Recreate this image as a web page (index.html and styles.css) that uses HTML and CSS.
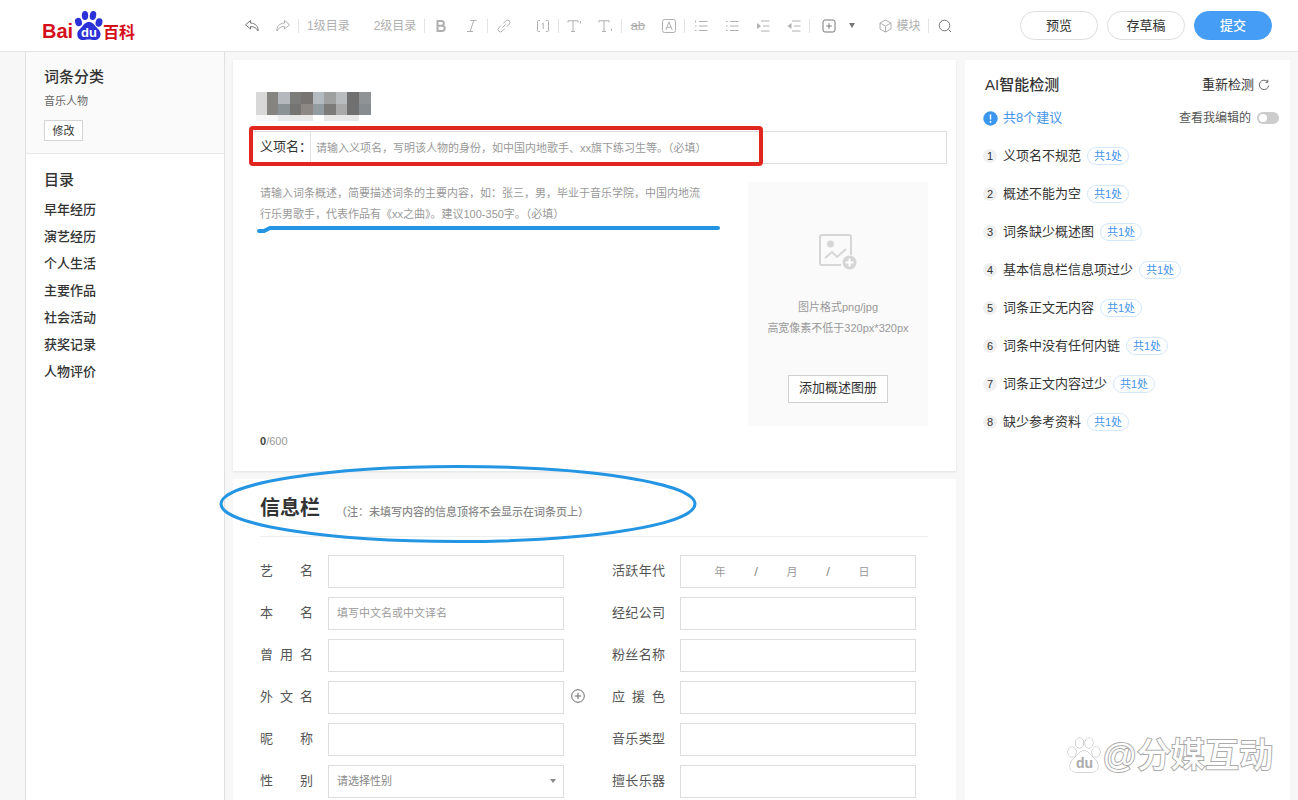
FILE: index.html
```html
<!DOCTYPE html>
<html lang="zh-CN">
<head>
<meta charset="utf-8">
<meta name="viewport" content="width=device-width, initial-scale=1">
<title>百度百科 词条编辑</title>
<link rel="stylesheet" href="styles.css">
</head>
<body>
<div class="page">
  <header class="topbar">
    <a class="logo" href="#" aria-label="百度百科">
      <svg width="94" height="32" viewBox="0 0 94 32">
        <text class="logo-latin" x="0" y="28">Bai</text>
        <g fill="#2b32d8">
          <ellipse cx="36.500" cy="12" rx="3.400" ry="4.300" transform="rotate(-18 36.500 12)"/>
          <ellipse cx="43" cy="5.500" rx="3.200" ry="4.500"/>
          <ellipse cx="51" cy="5.500" rx="3.200" ry="4.500" transform="rotate(10 51 5.500)"/>
          <ellipse cx="57" cy="12.500" rx="3.400" ry="4.300" transform="rotate(14 57 12.500)"/>
          <path d="M47 12c3.500 0 5 2.400 7 4.800 2 2.300 4.500 4 4.500 7.400 0 3.800-2.800 5.800-6 5.800-2.300 0-3.500-.6-5.700-.6s-3.600.6-5.900.6c-3.300 0-5.600-2.200-5.600-5.800 0-3.500 2.800-5 4.700-7.400C41.800 14.400 43.500 12 47 12z"/>
        </g>
        <text class="logo-du" x="39" y="27">du</text>
        <text class="logo-han" x="61" y="28">百科</text>
      </svg>
    </a>
    <div class="toolbar" role="toolbar" aria-label="编辑工具">
      <button class="tool tool-on" aria-label="撤销"><svg width="16" height="16" viewBox="0 0 16 16"><path d="M6.500 2.500 1.500 6.800l5 4.200V8.600c3.500-.2 5.800 1.300 7.600 4.400.3-4.600-2.600-7.700-7.600-8z"/></svg></button>
      <button class="tool" aria-label="重做"><svg width="16" height="16" viewBox="0 0 16 16"><path d="m9.500 2.500 5 4.300-5 4.200V8.600C6 8.400 3.700 9.900 1.900 13c-.3-4.600 2.600-7.700 7.600-8z"/></svg></button>
      <span class="sep"></span>
      <button class="tool-text">1级目录</button>
      <button class="tool-text tool-next">2级目录</button>
      <span class="sep"></span>
      <button class="tool" aria-label="加粗"><svg width="14" height="14" viewBox="0 0 14 14"><path stroke-width="2" d="M3.500 2h4a2.300 2.300 0 0 1 0 4.700h-4zM3.500 6.700h4.600a2.600 2.600 0 0 1 0 5.300H3.500z"/></svg></button>
      <button class="tool" aria-label="斜体"><svg width="14" height="14" viewBox="0 0 14 14"><path d="M5.500 1.500h6M2 12.500h6M8.700 1.500l-3.500 11"/></svg></button>
      <span class="sep"></span>
      <button class="tool" aria-label="链接"><svg width="14" height="14" viewBox="0 0 14 14"><path d="M5.300 8.700 8.700 5.300M6.300 4.300l2.500-2.500a2.400 2.400 0 0 1 3.400 3.400L9.700 7.700M7.700 9.700l-2.500 2.500a2.400 2.400 0 0 1-3.400-3.400l2.500-2.500"/></svg></button>
      <button class="tool tool-next" aria-label="参考资料"><svg width="14" height="14" viewBox="0 0 14 14"><path d="M4 1.500H2.500a1 1 0 0 0-1 1v9a1 1 0 0 0 1 1H4M10 1.500h1.500a1 1 0 0 1 1 1v9a1 1 0 0 1-1 1H10M5.800 5.300 7.200 4v6"/></svg></button>
      <span class="sep"></span>
      <button class="tool" aria-label="上标"><svg width="16" height="14" viewBox="0 0 16 14"><path d="M1 3.500V1.800h10v1.700M6 1.800v10.700M4 12.500h4M13.500 2v2.500"/></svg></button>
      <button class="tool" aria-label="下标"><svg width="16" height="14" viewBox="0 0 16 14"><path d="M1 3.500V1.800h10v1.700M6 1.800v10.700M4 12.500h4M13.500 9.500V12"/></svg></button>
      <span class="sep"></span>
      <button class="tool tool-strike" aria-label="删除线">ab</button>
      <button class="tool" aria-label="文字样式"><svg width="16" height="16" viewBox="0 0 16 16"><rect x="1.500" y="1.500" width="13" height="13" rx="2"/><path d="m4.800 12 3.200-8 3.200 8M6 9.300h4"/></svg></button>
      <span class="sep"></span>
      <button class="tool" aria-label="有序列表"><svg width="14" height="14" viewBox="0 0 14 14"><path d="M5 2.500h8.500M5 7h8.500M5 11.500h8.500M1.500 1.500v2M1 7h1.500M1 11.500h1.500"/></svg></button>
      <button class="tool" aria-label="无序列表"><svg width="14" height="14" viewBox="0 0 14 14"><path d="M5 2.500h8.500M5 7h8.500M5 11.500h8.500M1 2.500h1.500M1 7h1.500M1 11.500h1.500"/></svg></button>
      <button class="tool" aria-label="增加缩进"><svg width="14" height="14" viewBox="0 0 14 14"><path d="M5 2h8.500M7 7h6.500M5 12h8.500"/><path fill="currentColor" stroke="none" d="m1 4 4 3-4 3z"/></svg></button>
      <button class="tool" aria-label="减少缩进"><svg width="14" height="14" viewBox="0 0 14 14"><path d="M5 2h8.500M7 7h6.500M5 12h8.500"/><path fill="currentColor" stroke="none" d="M4.500 4v6L.5 7z"/></svg></button>
      <span class="sep"></span>
      <button class="tool-insert" aria-label="插入"><svg width="14" height="14" viewBox="0 0 14 14"><rect x="1" y="1" width="12" height="12" rx="2"/><path d="M7 4.200v5.600M4.200 7h5.600"/></svg><svg width="6" height="5" viewBox="0 0 6 5"><path fill="currentColor" stroke="none" d="M0 0h6L3 5z"/></svg></button>
      <button class="tool-module"><svg width="13" height="14" viewBox="0 0 13 14"><path d="m6.500 1 5.500 3v6l-5.500 3L1 10V4zM1 4l5.500 3L12 4M6.500 7v6"/></svg>模块</button>
      <span class="sep"></span>
      <button class="tool tool-on" aria-label="搜索"><svg width="14" height="14" viewBox="0 0 14 14"><circle cx="6.500" cy="6.500" r="5.300"/><path d="m10.500 10.500 2.500 2.500"/></svg></button>
    </div>
    <div class="actions">
      <button class="pill">预览</button>
      <button class="pill">存草稿</button>
      <button class="pill pill-primary">提交</button>
    </div>
  </header>

  <div class="columns">
    <aside class="sidebar">
      <section class="category">
        <h2 class="side-title">词条分类</h2>
        <p class="category-name">音乐人物</p>
        <button class="small-button">修改</button>
      </section>
      <nav class="toc" aria-label="目录">
        <h2 class="side-title">目录</h2>
        <ul class="toc-list">
          <li><a href="#">早年经历</a></li>
          <li><a href="#">演艺经历</a></li>
          <li><a href="#">个人生活</a></li>
          <li><a href="#">主要作品</a></li>
          <li><a href="#">社会活动</a></li>
          <li><a href="#">获奖记录</a></li>
          <li><a href="#">人物评价</a></li>
        </ul>
      </nav>
    </aside>

    <main class="editor">
      <section class="card summary">
        <svg class="masked-name" width="115" height="29" viewBox="0 0 115 29" role="img" aria-label="已遮挡的词条名">
          <path fill="#d8d8d8" d="M0 0h11v23H0z"/><path fill="#858481" d="M11 0h11v23H11z"/>
          <path fill="#b5b9bd" d="M22 0h12v12H22z"/><path fill="#8b9296" d="M22 12h12v11H22z"/>
          <path fill="#7c7d7b" d="M34 0h11v12H34z"/><path fill="#747472" d="M34 12h11v11H34z"/>
          <path fill="#777471" d="M45 0h12v12H45z"/><path fill="#8d8883" d="M45 12h12v11H45z"/>
          <path fill="#b4bbc0" d="M57 0h11v12H57z"/><path fill="#939ca0" d="M57 12h11v11H57z"/>
          <path fill="#9fa0a0" d="M68 0h12v12H68z"/><path fill="#7c7b79" d="M68 12h12v11H68z"/>
          <path fill="#b9bcbf" d="M80 0h11v12H80z"/><path fill="#a9a9a9" d="M80 12h11v11H80z"/>
          <path fill="#6f706f" d="M91 0h12v23H91z"/>
          <path fill="#8f9396" d="M103 0h12v12h-12z"/><path fill="#868c90" d="M103 12h12v11h-12z"/>
          <path fill="#f7f7f7" d="M0 23h22v6H0z"/><path fill="#e8e8e8" d="M22 23h35v6H22zM68 23h35v6H68z"/>
        </svg>
        <div class="sense">
          <label class="sense-label" for="sense">义项名：</label>
          <input class="sense-input" id="sense" type="text" placeholder="请输入义项名，写明该人物的身份，如中国内地歌手、xx旗下练习生等。（必填）">
          <span class="mark-box"></span>
        </div>
        <div class="intro">
          <div class="intro-text">
            <textarea class="intro-area" aria-label="词条概述" placeholder="请输入词条概述，简要描述词条的主要内容，如：张三，男，毕业于音乐学院，中国内地流行乐男歌手，代表作品有《xx之曲》。建议100-350字。（必填）"></textarea>
            <svg class="mark-line" width="464" height="8" viewBox="0 0 464 8"><path d="M3 6h5l6-3h448"/></svg>
          </div>
          <div class="album">
            <svg class="album-icon" width="40" height="38" viewBox="0 0 40 38">
              <path fill="none" stroke="#d6d6d6" stroke-width="2" d="M23 32H4a2 2 0 0 1-2-2V4a2 2 0 0 1 2-2h27a2 2 0 0 1 2 2v18M7 25l7-6 5 5 9-8"/>
              <circle cx="12.500" cy="11" r="3.500" fill="#d6d6d6"/>
              <circle cx="31.500" cy="29.500" r="7" fill="#d6d6d6"/>
              <path stroke="#fff" stroke-width="2" d="M31.500 25.500v8M27.500 29.500h8"/>
            </svg>
            <p class="album-hint">图片格式png/jpg<br>高宽像素不低于320px*320px</p>
            <button class="album-button">添加概述图册</button>
          </div>
        </div>
        <p class="counter"><b>0</b>/600</p>
      </section>

      <section class="card info">
        <div class="info-head">
          <h2 class="info-title">信息栏</h2>
          <span class="info-note">（注：未填写内容的信息顶将不会显示在词条页上）</span>
          <svg class="mark-ellipse" width="478" height="80" viewBox="0 0 478 80"><ellipse cx="239" cy="40" rx="237" ry="37.500"/></svg>
        </div>
        <form class="fields">
          <div class="field"><label for="f1">艺名</label><input id="f1" type="text"></div>
          <div class="field"><label for="year">活跃年代</label>
            <div class="date"><input id="year" type="text" placeholder="年"><span>/</span><input type="text" aria-label="月" placeholder="月"><span>/</span><input type="text" aria-label="日" placeholder="日"></div>
          </div>
          <div class="field"><label for="f2">本名</label><input id="f2" type="text" placeholder="填写中文名或中文译名"></div>
          <div class="field"><label for="f3">经纪公司</label><input id="f3" type="text"></div>
          <div class="field"><label for="f4">曾用名</label><input id="f4" type="text"></div>
          <div class="field"><label for="f5">粉丝名称</label><input id="f5" type="text"></div>
          <div class="field"><label for="f6">外文名</label><input id="f6" type="text">
            <button class="add" type="button" aria-label="添加外文名"><svg width="14" height="14" viewBox="0 0 14 14"><circle cx="7" cy="7" r="6.300"/><path d="M7 3.800v6.400M3.800 7h6.400"/></svg></button>
          </div>
          <div class="field"><label for="f7">应援色</label><input id="f7" type="text"></div>
          <div class="field"><label for="f8">昵称</label><input id="f8" type="text"></div>
          <div class="field"><label for="f9">音乐类型</label><input id="f9" type="text"></div>
          <div class="field"><label for="f10">性别</label>
            <div class="select"><select id="f10"><option>请选择性别</option><option>男</option><option>女</option></select><svg width="6" height="4" viewBox="0 0 6 4"><path fill="#888" d="M0 0h6L3 4z"/></svg></div>
          </div>
          <div class="field"><label for="f11">擅长乐器</label><input id="f11" type="text"></div>
        </form>
      </section>
    </main>

    <aside class="card checks">
      <div class="checks-row">
        <h2 class="checks-title">AI智能检测</h2>
        <button class="recheck">重新检测<svg width="12" height="12" viewBox="0 0 12 12"><path d="M9.500 2.700A4.700 4.700 0 1 0 10.700 6.500M9.800.8v2.500H7.500"/></svg></button>
      </div>
      <div class="checks-row checks-status">
        <p class="total"><svg width="15" height="15" viewBox="0 0 15 15"><circle cx="7.500" cy="7.500" r="7.200" fill="#3b96f0"/><path stroke="#fff" stroke-width="1.500" d="M7.500 3.500v5M7.500 10v1.700"/></svg>共8个建议</p>
        <label class="mine">查看我编辑的<input class="switch" type="checkbox" role="switch"></label>
      </div>
      <ol class="check-list">
        <li><i>1</i>义项名不规范<a href="#">共1处</a></li>
        <li><i>2</i>概述不能为空<a href="#">共1处</a></li>
        <li><i>3</i>词条缺少概述图<a href="#">共1处</a></li>
        <li><i>4</i>基本信息栏信息项过少<a href="#">共1处</a></li>
        <li><i>5</i>词条正文无内容<a href="#">共1处</a></li>
        <li><i>6</i>词条中没有任何内链<a href="#">共1处</a></li>
        <li><i>7</i>词条正文内容过少<a href="#">共1处</a></li>
        <li><i>8</i>缺少参考资料<a href="#">共1处</a></li>
      </ol>
      <div class="watermark">
        <svg width="34" height="36" viewBox="0 0 34 36" fill="#fff" stroke="#aaa">
          <ellipse cx="5" cy="15" rx="4" ry="5"/><ellipse cx="12.500" cy="6" rx="4" ry="5"/>
          <ellipse cx="22" cy="6" rx="4" ry="5"/><ellipse cx="29" cy="15" rx="4" ry="5"/>
          <path d="M17 14c4 0 6 3 8.500 6 2.500 2.800 5.500 4.500 5.500 9 0 4-3 6-6.500 6h-15C6 35 3 33 3 29c0-4.500 3-6.200 5.500-9 2.500-3 4.500-6 8.500-6z"/>
          <text class="watermark-du" x="9" y="31">du</text>
        </svg>
        <span>@分媒互动</span>
      </div>
    </aside>
  </div>
</div>
</body>
</html>
```
FILE: styles.css
```css
* {
  box-sizing: border-box;
}

body {
  margin: 0;
  background: #f7f7f7;
  color: #333;
  font-family: "Liberation Sans", "Noto Sans CJK SC", sans-serif;
  font-size: 13px;
  line-height: 20px;
}

h2,
p,
ul,
ol {
  margin: 0;
  padding: 0;
}

ul,
ol {
  list-style: none;
}

a {
  color: inherit;
  text-decoration: none;
}

button,
input,
select,
textarea {
  margin: 0;
  padding: 0;
  border: 0;
  border-radius: 0;
  background: none;
  color: inherit;
  font: inherit;
  outline: 0;
}

svg {
  display: block;
  flex: none;
}

::placeholder {
  color: #999;
  opacity: 1;
}

.page {
  display: flex;
  flex-direction: column;
  min-height: 100vh;
}

/* Top bar */
.topbar {
  display: flex;
  align-items: center;
  height: 52px;
  padding: 0 26px 0 42px;
  border-bottom: 1px solid #e6e6e6;
  background: #fff;
}

.logo {
  margin-right: 100px;
}

.logo-latin,
.logo-han {
  fill: #d6101a;
  font-weight: 700;
}

.logo-latin {
  font-size: 20px;
}

.logo-han {
  font-size: 16px;
}

.logo-du {
  fill: #fff;
  font-size: 13px;
  font-weight: 700;
}

.toolbar {
  display: flex;
  align-items: center;
  color: #b0b0b0;
  font-size: 12px;
}

.toolbar svg {
  fill: none;
  stroke: currentColor;
}

.toolbar button {
  display: flex;
  align-items: center;
  justify-content: center;
  height: 24px;
  white-space: nowrap;
}

.toolbar .tool {
  width: 31px;
}

.toolbar .tool-on,
.toolbar .tool-insert {
  color: #777;
}

.tool-text {
  padding: 0 8px;
}

.tool-next {
  margin-left: 8px;
}

.toolbar .tool-strike {
  font-size: 13px;
  text-decoration: line-through;
}

.toolbar .tool-insert {
  gap: 13px;
  padding: 0 12px;
}

.toolbar .tool-module {
  gap: 4px;
  padding: 0 8px 0 12px;
}

.sep {
  width: 1px;
  height: 14px;
  background: #e3e3e3;
}

.actions {
  display: flex;
  gap: 9px;
  margin-left: auto;
}

.pill {
  width: 78px;
  height: 29px;
  border: 1px solid #ddd;
  border-radius: 15px;
  background: #fff;
}

.pill-primary {
  border-color: #459df5;
  background: #459df5;
  color: #fff;
  font-weight: 500;
}

/* Columns */
.columns {
  display: flex;
  flex: 1;
  padding: 0 8px 0 25px;
}

.card {
  background: #fff;
}

.sidebar {
  flex: 0 0 200px;
  border: 1px solid #e0e0e0;
  border-width: 0 1px;
  background: #fff;
}

.category {
  padding: 15px 18px 12px;
  border-bottom: 1px solid #e8e8e8;
  background: #fafafa;
}

.side-title {
  font-size: 15px;
  font-weight: 500;
}

.category-name {
  margin: 4px 0 9px;
  color: #666;
  font-size: 11px;
}

.small-button {
  width: 39px;
  height: 21px;
  border: 1px solid #d5d5d5;
  background: #fff;
  font-size: 11px;
}

.toc {
  padding: 16px 18px;
}

.toc-list {
  margin-top: 6px;
  font-weight: 500;
  line-height: 27px;
}

/* Editor */
.editor {
  display: flex;
  flex: 1;
  flex-direction: column;
  gap: 8px;
  min-width: 0;
  margin: 8px 9px 0 8px;
}

.summary {
  padding: 32px 9px 20px 16px;
  box-shadow: 0 1px 2px #e2e2e2;
}

.masked-name {
  margin: 0 0 10px 7px;
}

.sense {
  position: relative;
  display: flex;
  align-items: center;
  height: 33px;
  border: 1px solid #ddd;
}

.sense-label {
  align-self: stretch;
  width: 61px;
  padding-left: 10px;
  border-right: 1px solid #e3e3e3;
  line-height: 30px;
  white-space: nowrap;
}

.sense-input {
  flex: 1;
  min-width: 0;
  padding-left: 5px;
  font-size: 11px;
}

.mark-box {
  position: absolute;
  top: -6px;
  left: -1px;
  width: 514px;
  height: 40px;
  border: 4px solid #e1261f;
  border-radius: 4px;
  pointer-events: none;
}

.intro {
  display: flex;
  gap: 38px;
  margin: 18px 19px 0 11px;
}

.intro-text {
  position: relative;
  display: flex;
  flex: 1;
}

.intro-area {
  flex: 1;
  min-width: 0;
  padding-top: 1px;
  font-size: 11px;
  line-height: 21px;
  resize: none;
}

.mark-line {
  position: absolute;
  top: 43px;
  left: -4px;
  fill: none;
  stroke: #2395e3;
  stroke-width: 4;
  stroke-linecap: round;
  pointer-events: none;
}

.album {
  display: flex;
  flex: 0 0 180px;
  flex-direction: column;
  align-items: center;
  padding: 51px 0 23px;
  background: #fafafa;
}

.album-hint {
  margin: 26px 0 36px;
  color: #999;
  font-size: 11px;
  line-height: 21px;
  text-align: center;
}

.album-button {
  width: 100px;
  height: 28px;
  padding-bottom: 2px;
  border: 1px solid #d0d0d0;
  background: #fff;
}

.counter {
  margin: 5px 0 0 11px;
  color: #999;
  font-size: 11px;
}

.counter b {
  color: #444;
}

/* Info fields */
.info {
  flex: 1;
  padding: 0 28px 0 27px;
}

.info-head {
  position: relative;
  display: flex;
  align-items: center;
  gap: 16px;
  height: 58px;
  border-bottom: 1px solid #eee;
}

.info-title {
  font-size: 20px;
  font-weight: 700;
}

.info-note {
  padding-top: 8px;
  color: #888;
  font-size: 11px;
  font-weight: 500;
}

.mark-ellipse {
  position: absolute;
  top: -15px;
  left: -41px;
  fill: none;
  stroke: #2395e3;
  stroke-width: 3;
  pointer-events: none;
}

.fields {
  display: grid;
  grid-template-columns: repeat(2, minmax(0, 1fr));
  gap: 9px 48px;
  padding: 18px 12px 0 0;
}

.field {
  position: relative;
  display: flex;
  gap: 15px;
  height: 33px;
}

.field label {
  flex: 0 0 53px;
  color: #555;
  line-height: 31px;
  text-align-last: justify;
}

.field > input,
.date,
.select {
  flex: 1;
  min-width: 0;
  border: 1px solid #ddd;
  font-size: 11px;
}

.field > input {
  padding: 0 8px 2px;
}

.date {
  display: flex;
  align-items: center;
  padding-left: 7px;
  color: #888;
}

.date input {
  width: 64px;
  text-align: center;
}

.date span {
  width: 8px;
  font-size: 13px;
  text-align: center;
}

.select {
  display: flex;
  align-items: center;
  padding: 0 7px 2px 8px;
  color: #888;
}

.select select {
  flex: 1;
  appearance: none;
}

.add {
  position: absolute;
  top: 8px;
  left: calc(100% + 7px);
}

.add svg {
  fill: none;
  stroke: #666;
}

/* Checks panel */
.checks {
  display: flex;
  flex: 0 0 325px;
  flex-direction: column;
  margin-top: 8px;
  padding: 15px 11px 21px 18px;
}

.checks-row {
  display: flex;
  align-items: center;
  justify-content: space-between;
}

.checks-title {
  padding-left: 2px;
  font-size: 15px;
  font-weight: 500;
}

.recheck {
  display: flex;
  align-items: center;
  gap: 4px;
  margin-right: 9px;
}

.recheck svg {
  fill: none;
  stroke: #666;
}

.checks-status {
  margin-top: 13px;
}

.total {
  display: flex;
  align-items: center;
  gap: 5px;
  color: #4494ea;
}

.mine {
  display: flex;
  align-items: center;
  gap: 6px;
  color: #555;
  font-size: 12px;
}

.switch {
  display: flex;
  align-items: center;
  width: 22px;
  height: 12px;
  padding: 0 2px;
  border-radius: 6px;
  background: #ccc;
  appearance: none;
}

.switch::before {
  width: 8px;
  height: 8px;
  border-radius: 4px;
  background: #fff;
  content: "";
}

.check-list {
  margin-top: 9px;
}

.check-list li {
  display: flex;
  align-items: center;
  height: 38px;
}

.check-list i {
  width: 14px;
  height: 14px;
  margin-right: 6px;
  border-radius: 7px;
  background: #f0f0f0;
  font-size: 11px;
  font-style: normal;
  line-height: 14px;
  text-align: center;
}

.check-list a {
  width: 42px;
  height: 18px;
  margin-left: 6px;
  border: 1px solid #d3e8fc;
  border-radius: 9px;
  color: #4494ea;
  font-size: 11px;
  line-height: 16px;
  text-align: center;
}

.watermark {
  display: flex;
  align-items: center;
  align-self: flex-end;
  gap: 1px;
  margin-top: auto;
  margin-right: 6px;
  color: #fff;
  font-size: 34px;
  font-weight: 500;
  line-height: 48px;
  -webkit-text-stroke: 2px #aaa;
  paint-order: stroke fill;
}

.watermark-du {
  fill: #aaa;
  stroke: none;
  font-size: 14px;
  font-weight: 700;
  -webkit-text-stroke: 0;
}
```
